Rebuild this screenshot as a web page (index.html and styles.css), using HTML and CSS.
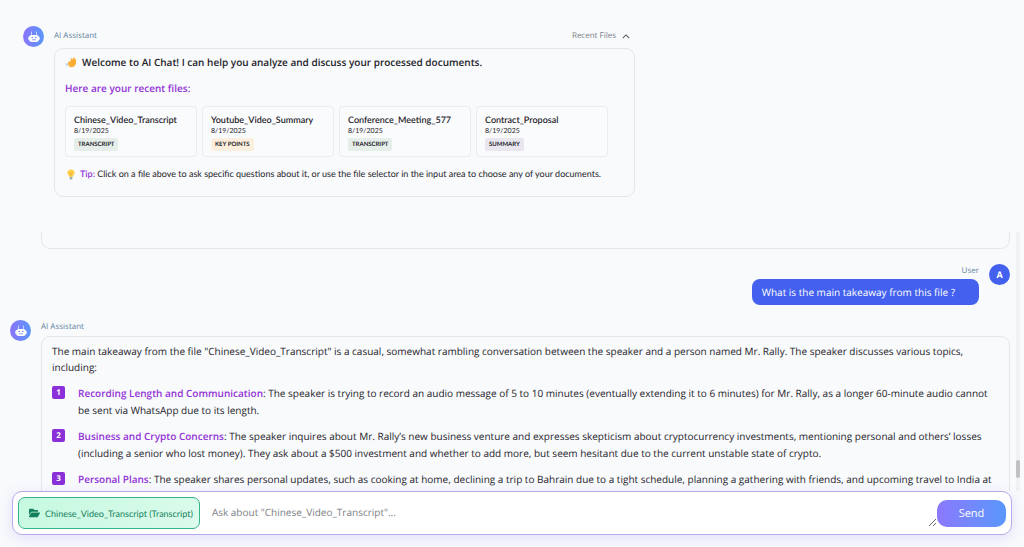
FILE: index.html
```html
<!DOCTYPE html>
<html lang="en">
<head>
    <meta charset="UTF-8">
    <meta name="viewport" content="width=device-width, initial-scale=1.0">
    <title>AI Chat</title>
    <link rel="stylesheet" href="styles.css">
</head>
<body>

<!-- robot icon shared by the assistant avatars -->
<svg class="sprite" aria-hidden="true">
    <symbol id="robot" viewBox="0 0 24 24">
        <path d="M7 2v6M17 2v6" stroke="#dbe4ff" stroke-width="1.600" stroke-linecap="round"/>
        <rect x="0" y="11" width="24" height="7" rx="3" fill="#dfe8ff"/>
        <rect x="2" y="8" width="20" height="14" rx="6" fill="#fff"/>
        <circle cx="8.500" cy="13" r="1.600" fill="#6d83f8"/>
        <circle cx="15.500" cy="13" r="1.600" fill="#6d83f8"/>
        <path d="M9 17.500h6" stroke="#6d83f8" stroke-width="1.500" stroke-linecap="round"/>
    </symbol>
</svg>

<section class="welcome">
    <div class="avatar bot"><svg class="robot"><use href="#robot"/></svg></div>
    <div class="welcome-body">
        <header class="welcome-header">
            <span class="name">AI Assistant</span>
            <button type="button" class="toggle">Recent Files
                <svg class="chevron" viewBox="0 0 10 6"><path d="M1 5l4-4 4 4" fill="none" stroke="currentColor" stroke-width="1.300"/></svg>
            </button>
        </header>
        <div class="welcome-card">
            <h1>
                <svg class="emoji" viewBox="0 0 24 24">
                    <path d="M9 21c-3-2-4-6-3-10 1-3 4-2 4 0l2-6c1-3 4-2 3 1l2-4c2-2 4 0 3 2l1 0c2 1 2 3 2 5 0 6-1 9-4 11-3 3-7 3-10 1z" fill="#fbb034"/>
                    <path d="M14 8l-2 6M17.500 8l-2 7M20.500 10l-2 6" stroke="#f09a28" stroke-width="1" fill="none"/>
                    <path d="M1 14c0 3 1 5 3 7M4 14c0 2 0 3 1 4M13 2c-1 0-2 1-3 2" stroke="#9db7c6" stroke-width="1.500" fill="none"/>
                </svg>
                Welcome to AI Chat! I can help you analyze and discuss your processed documents.
            </h1>
            <h2>Here are your recent files:</h2>
            <div class="files">
                <button type="button" class="file">
                    <span class="file-name">Chinese_Video_Transcript</span>
                    <span class="file-date">8/19/2025</span>
                    <span class="tag transcript">TRANSCRIPT</span>
                </button>
                <button type="button" class="file">
                    <span class="file-name">Youtube_Video_Summary</span>
                    <span class="file-date">8/19/2025</span>
                    <span class="tag key-points">KEY POINTS</span>
                </button>
                <button type="button" class="file">
                    <span class="file-name">Conference_Meeting_577</span>
                    <span class="file-date">8/19/2025</span>
                    <span class="tag transcript">TRANSCRIPT</span>
                </button>
                <button type="button" class="file">
                    <span class="file-name">Contract_Proposal</span>
                    <span class="file-date">8/19/2025</span>
                    <span class="tag summary">SUMMARY</span>
                </button>
            </div>
            <p class="tip">
                <svg class="emoji" viewBox="0 0 24 24">
                    <path d="M12 1c5 0 8 3 8 7 0 4-4 5-4 9H8c0-4-4-5-4-9 0-4 3-7 8-7z" fill="#fdd04a"/>
                    <path d="M9 9l3 2 3-2M12 11v6" stroke="#f0a020" stroke-width="1.500" fill="none"/>
                    <path d="M9 18h6v4l-3 1-3-1z" fill="#8fa3ad"/>
                </svg>
                <span><strong>Tip:</strong> Click on a file above to ask specific questions about it, or use the file selector in the input area to choose any of your documents.</span>
            </p>
        </div>
    </div>
</section>

<main class="chat">
    <div class="thread">
        <div class="previous"></div>

        <div class="message user">
            <div class="message-body">
                <span class="name">User</span>
                <p class="bubble">What is the main takeaway from this file ?</p>
            </div>
            <div class="avatar">A</div>
        </div>

        <div class="message">
            <div class="avatar bot"><svg class="robot"><use href="#robot"/></svg></div>
            <div class="message-body">
                <span class="name">AI Assistant</span>
                <div class="answer">
                    <p>The main takeaway from the file "Chinese_Video_Transcript" is a casual, somewhat rambling conversation between the speaker and a person named Mr. Rally. The speaker discusses various topics, including:</p>
                    <ol>
                        <li><span class="number">1</span><p><strong>Recording Length and Communication</strong>: The speaker is trying to record an audio message of 5 to 10 minutes (eventually extending it to 6 minutes) for Mr. Rally, as a longer 60-minute audio cannot be sent via WhatsApp due to its length.</p></li>
                        <li><span class="number">2</span><p><strong>Business and Crypto Concerns</strong>: The speaker inquires about Mr. Rally’s new business venture and expresses skepticism about cryptocurrency investments, mentioning personal and others’ losses (including a senior who lost money). They ask about a $500 investment and whether to add more, but seem hesitant due to the current unstable state of crypto.</p></li>
                        <li><span class="number">3</span><p><strong>Personal Plans</strong>: The speaker shares personal updates, such as cooking at home, declining a trip to Bahrain due to a tight schedule, planning a gathering with friends, and upcoming travel to India at</p></li>
                    </ol>
                </div>
            </div>
        </div>
    </div>
    <div class="scrollbar"><div class="thumb"></div></div>
</main>

<form class="composer">
    <button type="button" class="selected-file">
        <svg class="folder" viewBox="0 0 576 512"><path fill="currentColor" d="M88.700 223.800L0 375.800V96C0 60.700 28.700 32 64 32h117.500c17 0 33.300 6.700 45.300 18.700l26.500 26.500c12 12 28.300 18.800 45.300 18.800H416c35.300 0 64 28.700 64 64v32H144c-22.800 0-43.800 12.100-55.300 31.800zm27.600 16.100C122.100 230 132.600 224 144 224h400c11.500 0 22 6.100 27.700 16.100s5.700 22.200-.1 32.100l-112 192C453.900 474 443.400 480 432 480H32c-11.500 0-22-6.100-27.700-16.100s-5.700-22.200.1-32.100l112-192z"/></svg>
        Chinese_Video_Transcript (Transcript)
    </button>
    <textarea rows="1" aria-label="Message" placeholder="Ask about &quot;Chinese_Video_Transcript&quot;..."></textarea>
    <button type="submit" class="send">Send</button>
</form>

</body>
</html>
```
FILE: styles.css
```css
* {
    box-sizing: border-box;
}
body {
    margin: 0;
    height: 100vh;
    display: flex;
    flex-direction: column;
    overflow: hidden;
    background: #f8fafc;
    color: #1f2329;
    font-family: "Open Sans", "Segoe UI", sans-serif;
    font-size: 10px;
    text-rendering: geometricPrecision;
}
h1, h2, p, ol {
    margin: 0;
    padding: 0;
}
button, textarea {
    font-family: inherit;
    color: inherit;
    text-rendering: inherit;
}
button {
    cursor: pointer;
}
.sprite {
    display: none;
}
.avatar {
    flex: none;
    display: flex;
    align-items: center;
    justify-content: center;
    width: 21px;
    height: 21px;
    border-radius: 50%;
    background: #4361ee;
    color: white;
    font-size: 9px;
    font-weight: 700;
}
.avatar.bot {
    background: linear-gradient(90deg, #8b74fb, #5a97fb);
}
.robot {
    width: 12px;
    height: 12px;
}
.name {
    color: #64829c;
    font-size: 8px;
    line-height: 14px;
}

/* welcome block */
.welcome {
    flex: none;
    display: flex;
    align-items: flex-start;
    gap: 10px;
    padding: 26px 23px 35px;
}
.welcome-body {
    padding-top: 3px;
}
.welcome-header {
    display: flex;
    justify-content: space-between;
    padding-right: 5px;
}
.toggle {
    display: flex;
    align-items: center;
    gap: 6px;
    border: none;
    background: none;
    padding: 0;
    color: #7a8088;
    font-size: 8px;
    line-height: 14px;
}
.chevron {
    width: 8px;
    height: 5px;
    color: #555b63;
}
.welcome-card {
    margin-top: 5px;
    padding: 5px 26px 14px 10px;
    border: 1px solid #e3e7ec;
    border-radius: 9px;
}
h1, h2 {
    display: flex;
    align-items: center;
    gap: 5px;
    font-size: 10px;
    font-weight: 600;
    line-height: 16px;
}
h2 {
    margin-top: 10px;
    color: #9333d6;
}
.emoji {
    flex: none;
    width: 12px;
    height: 11px;
}
.file, .tip, .selected-file {
    font-family: Lato, "Segoe UI", sans-serif;
}
.files {
    display: grid;
    grid-template-columns: repeat(4, 1fr);
    gap: 5px;
    margin-top: 10px;
}
.file {
    display: flex;
    flex-direction: column;
    align-items: flex-start;
    min-width: 132px;
    padding: 6px 8px 5px;
    border: 1px solid #e9ecf0;
    border-radius: 4px;
    background: #fafbfd;
    text-align: left;
}
.file-name {
    font-size: 9px;
    font-weight: 600;
    line-height: 13px;
}
.file-date {
    font-size: 7px;
    line-height: 10px;
}
.tag {
    margin-top: 2px;
    padding: 0 4px;
    border-radius: 2px;
    font-size: 6px;
    font-weight: 700;
    line-height: 13px;
}
.transcript {
    background: #e5eee9;
}
.key-points {
    background: #fcefdd;
}
.summary {
    background: #e9e6ef;
}
.tip {
    display: flex;
    align-items: center;
    gap: 3px;
    margin-top: 9px;
    font-size: 9px;
    line-height: 16px;
}
.tip strong {
    color: #9333d6;
    font-weight: 600;
}

/* conversation */
.chat {
    flex: 1;
    min-height: 0;
    display: flex;
    gap: 6px;
    padding-right: 4px;
}
.thread {
    flex: 1;
    overflow: hidden;
    padding-left: 10px;
}
.previous {
    height: 17px;
    margin-left: 31px;
    border: 1px solid #e3e7ec;
    border-top: none;
    border-radius: 0 0 9px 9px;
}
.message {
    display: flex;
    align-items: flex-start;
    gap: 10px;
    margin-top: 15px;
}
.message-body {
    display: flex;
    flex-direction: column;
}
.user {
    justify-content: flex-end;
}
.user .message-body {
    align-items: flex-end;
}
.bubble {
    margin-top: 1px;
    padding: 5px 24px 5px 10px;
    border-radius: 8px;
    background: #4361ee;
    color: white;
    line-height: 16px;
}
.answer {
    margin-top: 2px;
    padding: 6px 16px 20px 10px;
    border: 1px solid #e3e7ec;
    border-radius: 9px;
    line-height: 16px;
}
.answer ol {
    padding-top: 1px;
}
.answer li {
    display: flex;
    gap: 13px;
    margin-top: 9px;
    line-height: 17px;
}
.answer strong {
    color: #9333d6;
    font-weight: 600;
}
.number {
    flex: none;
    width: 13px;
    height: 13px;
    margin-top: 1px;
    border-radius: 2px;
    background: #8b2fd8;
    color: white;
    font-size: 8px;
    font-weight: 700;
    line-height: 13px;
    text-align: center;
}
.scrollbar {
    display: flex;
    flex-direction: column;
    justify-content: flex-end;
    width: 4px;
    padding-bottom: 13px;
    background: #f1f2f4;
}
.thumb {
    height: 18px;
    border-radius: 2px;
    background: #c1c1c4;
}

/* message input */
.composer {
    flex: none;
    display: flex;
    align-items: center;
    margin: 0 12px 12px;
    padding: 5px;
    border: 1px solid #b9a9ea;
    border-radius: 10px;
    background: white;
    box-shadow: 0 3px 14px rgba(124, 108, 250, 0.18);
}
.selected-file {
    display: flex;
    align-items: center;
    gap: 5px;
    height: 32px;
    padding: 0 6px 0 10px;
    border: 1px solid #35b58a;
    border-radius: 7px;
    background: linear-gradient(135deg, #c5f9e0, #dcfbec);
    color: #12805c;
    font-size: 9px;
}
.folder {
    width: 11px;
    height: 10px;
}
textarea {
    flex: 1;
    height: 28px;
    padding: 6px 12px;
    border: none;
    outline: none;
    background: none;
    font-size: 10px;
    line-height: 14px;
    resize: vertical;
}
textarea::placeholder {
    color: #7d7f84;
}
.send {
    width: 69px;
    height: 27px;
    border: none;
    border-radius: 10px;
    background: linear-gradient(90deg, #8b79fb, #5a97fc);
    color: white;
    font-size: 11px;
}
```
